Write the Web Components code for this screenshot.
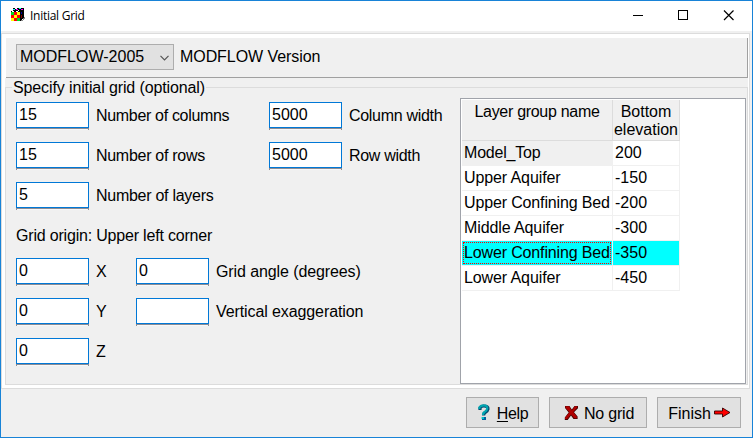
<!DOCTYPE html>
<html lang="en"><head><meta charset="utf-8"><title>Initial Grid</title>
<style>
html,body{margin:0;width:753px;height:438px;overflow:hidden;font:16px/18px "Liberation Sans",Arial,sans-serif;color:#000}
</style></head><body>
<grid-window></grid-window>
<script>
const define=(name,css,html)=>customElements.define(name,class extends HTMLElement{
  constructor(){super();this.attachShadow({mode:'open'}).innerHTML=`<style>*{box-sizing:border-box}${css}</style>${typeof html==='function'?html(this):html}`;}
});

define('app-icon',':host{display:block;width:16px;height:16px}svg{display:block}',`
<svg width="16" height="16" shape-rendering="crispEdges">
<path fill="#000" d="M3 0h11v11h-2v2H1V3h2z"/>
<path fill="#ff0" d="M1 4h9v9H1z"/>
<path fill="#f00" d="M1 7h3v3H1zM7 7h3v3H7zM4 4h3v3H4zM4 10h3v3H4z"/>
<path fill="#0d2" d="M1 4h3v3H1zM7 10h3v3H7z"/>
<path fill="#0ff" d="M3 1h2v1H3zM9 0h2v1H9z"/><path fill="#f0f" d="M6 1h2v1H6zM11 1h2v1h-2z"/><path fill="#fff" d="M2 3h2v1H2zM5 0h2v1H5zM6 3h2v1H6zM8 2h1v1H8z"/>
<path fill="#00a" d="M11 4h1v2h-1z"/><path fill="#800" d="M11 7h1v3h-1z"/>
<path fill="#888" d="M13 10h1V9h1v2h-1v1h-1v1h-2v-1h2z"/>
</svg>`);

define('title-bar',`:host{display:flex;align-items:center;height:30px;background:#fff;padding-left:9px;font:12px/16px "Open Sans","Noto Sans",sans-serif}
app-icon{margin-right:4px}.t{flex:1;letter-spacing:-.27px}svg{display:block}`,`
<app-icon></app-icon><span class="t"><slot></slot></span>
<svg width="120" height="30" fill="none" stroke="#000"><path d="M1 14.5h10" shape-rendering="crispEdges"/><path d="M46.5 9.5h9v9h-9z" shape-rendering="crispEdges"/><path d="M92 9.5l9.5 9.5M101.5 9.5L92 19" stroke-width="1.2"/></svg>`);

define('version-bar',`:host{display:flex;height:41px;border:solid #fff;border-width:1px 0 0 1px;box-shadow:inset -1px -1px #a0a0a0;background:#f0f0f0;padding:6px 0 0 10px}
.c{width:158px;height:26px;border:1px solid #adadad;background:#e1e1e1;display:flex;align-items:center;padding:0 4px 0 3px;justify-content:space-between}
.c svg{margin-top:1px}.l{margin:4px 0 0 6px;letter-spacing:-.07px}`,`
<div class="c"><span>MODFLOW-2005</span><svg width="9" height="6" fill="none" stroke="#555" stroke-width="1.2"><path d="M.5 .8l4 4 4-4"/></svg></div><span class="l">MODFLOW Version</span>`);

define('edit-field',`:host{display:flex;height:28px;width:var(--w,120px);white-space:nowrap}
.b{flex:none;width:73px;height:28px;border:solid #8c8c94;border-width:0 1px;background:linear-gradient(#8c8c94,#8c8c94) 0 26px/100% 1px no-repeat #f8f8f8}
.i{height:26px;margin:0 -1px;border:1px solid #0078d7;background:#fff;padding:3px 2px}
.l{margin:5px 0 0 7px;letter-spacing:var(--ls,0)}`,e=>`<div class="b"><div class="i">${e.getAttribute('value')||''}</div></div><span class="l"><slot></slot></span>`);

define('layer-table',`:host{display:block;width:286px;height:286px;border:1px solid #a0a3aa;background:#fff;padding:1px}
.g{display:grid;grid-template-columns:151px 67px;grid-template-rows:41px repeat(6,25px);width:218px}
.g>*{border:solid #f0f0f0;border-width:0 1px 1px 0;padding:3px 0 0 2px;white-space:nowrap}
.g>.h{background:#f0f0f0;border-color:#dcdcdc;text-align:center;padding:3px 0 0}
.g>.s{background:#0ff;background-clip:padding-box}
.f{padding:1px!important}.f div{height:22px;width:148px;outline:1px dotted #f00;outline-offset:-1px;padding:2px 0 0 1px}`,()=>{
 const rows=[['Model_Top',200,-.2],['Upper Aquifer',-150,-.1],['Upper Confining Bed',-200,-.14],['Middle Aquifer',-300,-.1],['Lower Confining Bed',-350,-.14],['Lower Aquifer',-450,-.1]];
 return `<div class="g"><div class="h" style="letter-spacing:-.3px">Layer group name</div><div class="h">Bottom<br>elevation</div>${rows.map(([n,v,s],i)=>
 (i===4?`<div class="s f" style="letter-spacing:${s}px"><div>${n}</div></div>`:`<div style="letter-spacing:${s}px${i?'':';background:#f0f0f0'}">${n}</div>`)+`<div${i===4?' class="s"':''}>${v}</div>`).join('')}</div>`;
});

define('grid-group',`:host{display:block;height:307px;background:#f0f0f0}
fieldset{margin:0;padding:0;border:1px solid #dcdcdc;height:307px;min-width:0}
legend{margin-left:6px;padding:1px 1px 0;height:18px;line-height:18px;letter-spacing:-.12px}
.m{display:flex;justify-content:space-between;padding:0 1px 0 10px;margin-top:2px}
.r{display:flex;height:40px}.o{height:36px;padding-top:5px;letter-spacing:-.19px}.form{padding-top:4px}`,`
<fieldset><legend>Specify initial grid (optional)</legend><div class="m"><div class="form">
<div class="r"><edit-field value="15" style="--w:253px;--ls:-.32px">Number of columns</edit-field><edit-field value="5000" style="--ls:-.3px">Column width</edit-field></div>
<div class="r"><edit-field value="15" style="--w:253px;--ls:-.29px">Number of rows</edit-field><edit-field value="5000" style="--ls:-.3px">Row width</edit-field></div>
<div class="r"><edit-field value="5" style="--ls:-.27px">Number of layers</edit-field></div>
<div class="o">Grid origin: Upper left corner</div>
<div class="r"><edit-field value="0">X</edit-field><edit-field value="0" style="--ls:-.1px">Grid angle (degrees)</edit-field></div>
<div class="r"><edit-field value="0">Y</edit-field><edit-field style="--ls:-.1px">Vertical exaggeration</edit-field></div>
<div class="r"><edit-field value="0">Z</edit-field></div>
</div><layer-table></layer-table></div></fieldset>`);

define('push-button',`:host{display:flex;align-items:center;justify-content:center;height:31px;border:1px solid #adadad;background:#e1e1e1;white-space:nowrap;padding-top:2px;box-sizing:border-box}`,`<slot></slot>`);

define('button-row',`:host{display:flex;justify-content:flex-end;gap:10px;padding:8px 11px 0 0}
u{text-underline-offset:2px;text-decoration-thickness:1px}svg{flex:none;position:relative;top:-1px}`,`
<push-button style="width:73px"><svg width="12" height="17" style="margin:0 7px 0 1px" fill="none"><path d="M2 6V4Q3 2 6 2Q10.3 2 10 5Q9.6 7.4 7.2 8.4Q5.7 9.4 5.6 11.5" stroke="#004a70" stroke-width="3.2"/><path d="M1.4 5V3.4Q3 1.3 6 1.4Q9.6 1.4 9.2 4.6Q8.8 7 6.6 8Q5 9 4.9 11" stroke="#00a5b0" stroke-width="2.2"/><path d="M4 13h4v3H4z" fill="#0060a0"/><path d="M3.6 13h2.4v2H3.6z" fill="#00c0c8"/></svg><span style="letter-spacing:-.4px"><u>H</u>elp</span></push-button>
<push-button style="width:98px"><svg width="14" height="15" style="margin:0 6px 0 2px"><path d="M1 1h4.5l2.3 3.5L10.5 1H14v2.2L10 7.2l3.6 4.3V14H9.5L7 10.6 3.7 15H.8v-2.6L4.7 7.5 1 3z" fill="#400"/><path d="M1.4 1.3H5L7.8 5.4 11 1.3h2.3v1L9.3 7l3.6 4.7v1.6h-2.6L7 9.4 3.2 14H1v-1.2l4.3-5.6L1.4 2.4z" fill="#b00000"/></svg><span style="letter-spacing:-.2px">No grid</span></push-button>
<push-button style="width:84px"><span style="margin-left:1px">Finish</span><svg width="17" height="11" style="margin-left:3px"><path d="M.5 4h8V1l7.5 4.5L8.5 10V7h-8z" fill="#f00" stroke="#300" stroke-width=".9"/></svg></push-button>`);

define('grid-window',`:host{display:block;width:753px;height:438px;border:1px solid #1883d7;background:#f0f0f0;box-sizing:border-box}
.page{width:749px;height:356px;margin-top:2px;border:1px solid #dcdcdc;background:#fff;padding:3px 1px 3px 3px}`,`
<title-bar>Initial Grid</title-bar><div class="page"><version-bar></version-bar><grid-group></grid-group></div><button-row></button-row>`);
</script></body></html>
